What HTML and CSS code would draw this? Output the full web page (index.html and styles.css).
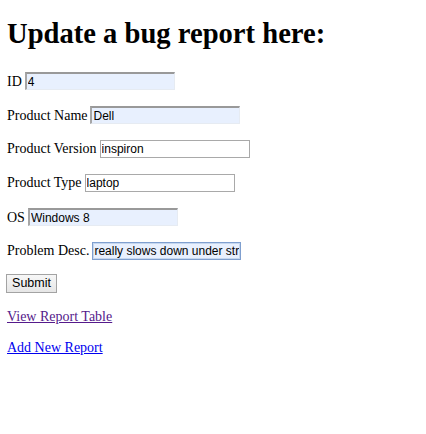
FILE: index.html
```html
<!DOCTYPE html>
<html>
<head>
<meta charset="utf-8">
<link rel="stylesheet" href="styles.css">
</head>
<body>
<div class="page">
  <h1 class="title">Update a bug report here:</h1>
  <form class="form">
    <div class="row"><span class="label">ID</span><input class="field auto" type="text" value="4"></div>
    <div class="row"><span class="label">Product Name</span><input class="field auto" type="text" value="Dell"></div>
    <div class="row"><span class="label">Product Version</span><input class="field plain" type="text" value="inspiron"></div>
    <div class="row"><span class="label">Product Type</span><input class="field plain" type="text" value="laptop"></div>
    <div class="row"><span class="label">OS</span><input class="field auto" type="text" value="Windows 8"></div>
    <div class="row"><span class="label">Problem Desc.</span><input class="field focus" type="text" value="really slows down under stress"></div>
    <div class="btnrow"><button class="submit" type="button">Submit</button></div>
  </form>
  <div class="links">
    <a class="link visited" href="#">View Report Table</a>
    <a class="link fresh" href="#">Add New Report</a>
  </div>
</div>
</body>
</html>
```

FILE: styles.css
```css
html, body {
  margin: 0;
  padding: 0;
  background: #ffffff;
}
.page {
  padding: 0 7px;
  font-family: "Liberation Serif", "Times New Roman", serif;
  color: #000;
}
.title {
  margin: 19px 0 0 0;
  font-size: 28.6px;
  line-height: 30px;
  font-weight: bold;
}
.form {
  margin-top: 23px;
  display: flex;
  flex-direction: column;
  gap: 16px;
}
.row {
  display: flex;
  align-items: baseline;
  gap: 3px;
  height: 18px;
  font-size: 14px;
}
.label {
  white-space: nowrap;
}
.field {
  box-sizing: border-box;
  width: 150px;
  height: 18px;
  margin: 0;
  padding: 0 1px;
  font-family: "Liberation Sans", Arial, sans-serif;
  font-size: 12px;
  color: #000;
  outline: none;
}
.auto {
  background: #e8f0fe;
  border-style: solid;
  border-width: 2px 1px 1px 2px;
  border-color: #999999 #e6ebf2 #e6ebf2 #a6a6a6;
}
.plain {
  background: #ffffff;
  border: 1px solid #a9a9a9;
}
.focus {
  width: 149px;
  background: #e8f0fe;
  border: 1px solid #7f9fcf;
  box-shadow: inset 0 0 0 1px #c5d7ef;
}
.btnrow {
  margin-top: -3px;
  height: 19px;
}
.submit {
  box-sizing: border-box;
  margin: 0 0 0 -1px;
  width: 51px;
  height: 19px;
  padding: 0 4px;
  font-family: "Liberation Sans", Arial, sans-serif;
  font-size: 12.5px;
  color: #000;
  background: linear-gradient(#f7f7f7, #e6e6e6);
  border: 1px solid #a3a3a3;
  border-radius: 0;
}
.links {
  margin-top: 17px;
  display: flex;
  flex-direction: column;
  align-items: flex-start;
  gap: 16px;
  font-size: 14px;
  line-height: 15px;
}
.link {
  text-decoration: underline;
}
.visited {
  color: #551a8b;
}
.fresh {
  color: #0000ee;
}
```
